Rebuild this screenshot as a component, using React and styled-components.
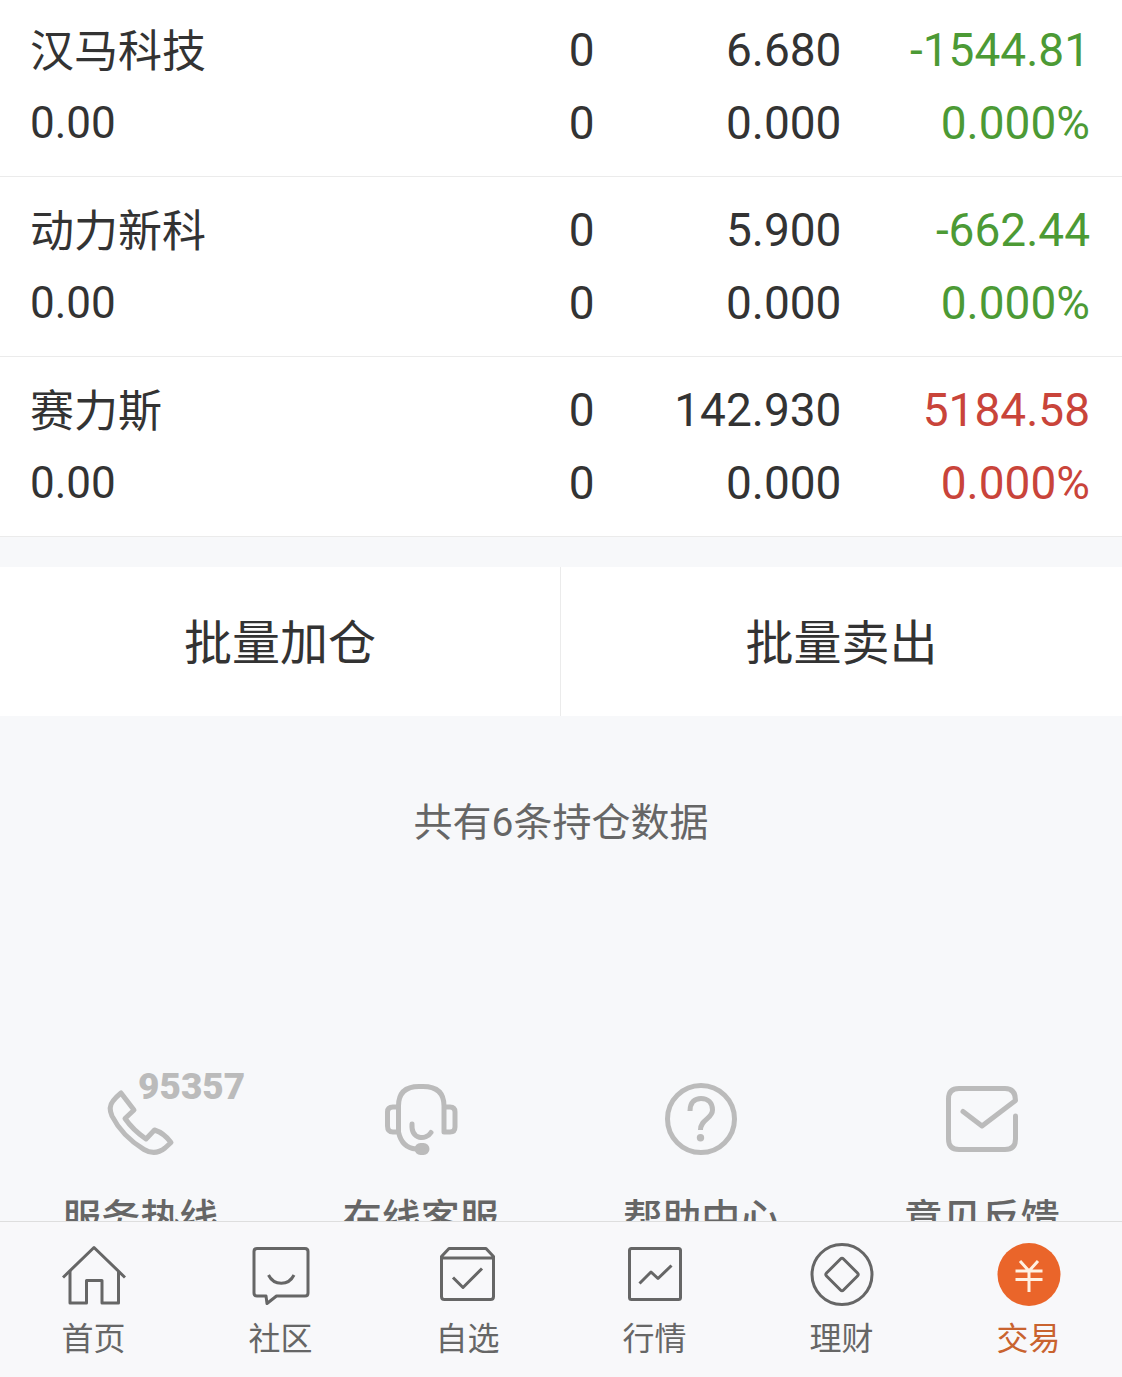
import React from "react";
import styled, { createGlobalStyle } from "styled-components";

const color = {
  ink: "#333333",
  muted: "#666666",
  icon: "#bbbbbb",
  up: "#c9443a",
  down: "#4c9a35",
  accent: "#ea652a",
  accentText: "#c9632f",
  page: "#f7f8fa",
  bar: "#f8f8fa",
  line: "#ebebeb",
};

const GlobalStyle = createGlobalStyle`
  * { box-sizing: border-box; }
  body {
    margin: 0;
    background: ${color.page};
    color: ${color.ink};
    font-family: Roboto, "Noto Sans CJK SC", sans-serif;
  }
`;

const Screen = styled.div`
  display: flex;
  flex-direction: column;
  height: 100vh;
`;

const Content = styled.main`
  flex: 1;
  min-height: 0;
  overflow-y: auto;
  scrollbar-width: none;
`;

const Positions = styled.table`
  width: 100%;
  margin-top: -3px;
  table-layout: fixed;
  border-collapse: separate;
  border-spacing: 0;
  background: #ffffff;
`;

const Column = styled.col`
  width: ${(p) => p.$share}%;
`;

const Cell = styled.td`
  padding: 17px 0 16px;
  border-bottom: 1px solid ${color.line};
  color: ${(p) => p.$tone || color.ink};
  text-align: right;
  font-size: 46px;
  line-height: 73px;

  &:last-child {
    padding-right: 32px;
  }
`;

const NameCell = styled.th`
  padding: 17px 0 16px 30px;
  border-bottom: 1px solid ${color.line};
  text-align: left;
  font-size: 44px;
  font-weight: 400;
  line-height: 73px;
`;

const Line = styled.div`
  height: 73px;
  white-space: nowrap;
`;

const StockName = styled(Line)`
  line-height: 77px;
`;

const Actions = styled.div`
  display: grid;
  grid-template-columns: 1fr 1fr;
  margin-top: 30px;
  background: #ffffff;
`;

const Action = styled.button`
  padding: 41px 0 36px;
  border: 0;
  background: none;
  color: ${color.ink};
  font: inherit;
  font-size: 48px;
  line-height: 72px;

  &:first-child {
    border-right: 1px solid ${color.line};
  }
`;

const Summary = styled.p`
  margin: 62px 0 0;
  color: ${color.muted};
  text-align: center;
  font-size: 39px;
  line-height: 90px;
`;

const Services = styled.div`
  display: grid;
  grid-template-columns: repeat(4, 1fr);
  margin-top: 215px;
`;

const Service = styled.a`
  display: flex;
  flex-direction: column;
  align-items: center;
  gap: 32px;
  color: ${color.muted};
  text-decoration: none;
  font-size: 39px;
  font-weight: 500;
  line-height: 64px;
`;

const ServiceIcon = styled.svg`
  width: 72px;
  height: 72px;
  overflow: visible;
  fill: none;
  stroke: ${color.icon};
  stroke-width: 5;
  stroke-linecap: round;
  stroke-linejoin: round;
`;

const HotlineNumber = styled.text`
  fill: ${color.icon};
  stroke: none;
  font-size: 37px;
  font-weight: 900;
`;

const TabBar = styled.nav`
  display: grid;
  grid-template-columns: repeat(6, 1fr);
  padding: 21px 0 14px;
  border-top: 1px solid #dedede;
  background: ${color.bar};
`;

const Tab = styled.a`
  display: flex;
  flex-direction: column;
  align-items: center;
  gap: 8px;
  color: ${(p) => (p.$active ? color.accentText : color.muted)};
  text-decoration: none;
  font-size: 32px;
  line-height: 48px;
`;

const TabIcon = styled.svg`
  width: 64px;
  height: 64px;
  fill: none;
  stroke: ${color.muted};
  stroke-width: 3;
  stroke-linejoin: round;
`;

const positions = [
  { name: "汉马科技", price: "6.680", profit: "-1544.81", tone: color.down },
  { name: "动力新科", price: "5.900", profit: "-662.44", tone: color.down },
  { name: "赛力斯", price: "142.930", profit: "5184.58", tone: color.up },
];

const services = [
  {
    label: "服务热线",
    icon: (
      <>
        <path d="M17 10 30 27 21 35.500Q29 47 42 56L50.500 47Q60 50 67 59.500L61 65Q51 73 40 66.500Q18 53 8 33Q4 24 9 18Q12 14 17 10Z" />
        <HotlineNumber x="34" y="16">95357</HotlineNumber>
      </>
    ),
  },
  {
    label: "在线客服",
    icon: (
      <>
        <path d="M13.500 24V23Q13.500 3.500 34 3.500H38Q59 3.500 59 23V49H65Q70 49 70 44V29Q70 24 65 24H59" />
        <path d="M13.500 24H8Q2.500 24 2.500 29V43Q2.500 49 8 49H13.500V24M13.500 49Q17 65 31 66" />
        <path d="M27 41C26 57 41 57.500 46 49.500" />
        <rect x="32" y="62.500" width="10" height="7" rx="3.500" fill={color.icon} />
      </>
    ),
  },
  {
    label: "帮助中心",
    icon: (
      <>
        <circle cx="36" cy="36" r="33.500" />
        <path
          d="M25 28C25 19 30 15.500 36 15.500C43 15.500 47.500 20 47.500 27C47.500 36 35.500 36 35.500 47"
          strokeLinecap="butt"
        />
        <circle cx="35.500" cy="54.700" r="3.700" fill={color.icon} stroke="none" />
      </>
    ),
  },
  {
    label: "意见反馈",
    icon: (
      <path d="M69.500 33V56Q69.500 66.500 59 66.500H13Q2.500 66.500 2.500 56V16Q2.500 5.500 13 5.500H59Q69.500 5.500 69.500 17.500L36 43 17 28.500" />
    ),
  },
];

const tabs = [
  {
    label: "首页",
    icon: (
      <>
        <path d="M1 34.500 32 4.500 63 34.500" />
        <path d="M8 28V60H24.500V37.500H40V60H56.500V28" />
      </>
    ),
  },
  {
    label: "社区",
    icon: (
      <>
        <path d="M8 5.500H56Q59 5.500 59 8.500V50Q59 53 56 53H27.500L18 60.500 17 53H8Q5 53 5 50V8.500Q5 5.500 8 5.500Z" />
        <path d="M19.500 32C25 43 39.500 43 45 32" />
      </>
    ),
  },
  {
    label: "自选",
    icon: (
      <>
        <path d="M5.500 13.500 13 5.500H50L57.500 13.500V53.500Q57.500 56.500 54.500 56.500H8.500Q5.500 56.500 5.500 53.500ZM5.500 15H57.500" />
        <path d="M17 34.500 27 44.500 46 25.500" />
      </>
    ),
  },
  {
    label: "行情",
    icon: (
      <>
        <rect x="6.500" y="5.500" width="51" height="51" rx="2" />
        <path d="M16.500 40.500 28 29 35 35.500 48.500 22.500" />
      </>
    ),
  },
  {
    label: "理财",
    icon: (
      <>
        <circle cx="32" cy="31.500" r="30" />
        <path d="M30.500 16Q32 14.500 33.500 16L47.500 30Q49 31.500 47.500 33L33.500 47Q32 48.500 30.500 47L16.500 33Q15 31.500 16.500 30Z" />
      </>
    ),
  },
  {
    label: "交易",
    active: true,
    icon: (
      <>
        <circle cx="32" cy="31.500" r="31.500" fill={color.accent} stroke="none" />
        <path d="M23 18 32 28 41 18M18.500 28H45.500M18.500 36.500H45.500M32 28V49" stroke="#fff1e2" />
      </>
    ),
  },
];

export default function App() {
  return (
    <Screen>
      <GlobalStyle />
      <Content>
        <Positions>
          <colgroup>
            <Column $share={35} />
            <Column $share={18} />
            <Column $share={22} />
            <Column $share={25} />
          </colgroup>
          <tbody>
            {positions.map((item) => (
              <tr key={item.name}>
                <NameCell scope="row">
                  <StockName>{item.name}</StockName>
                  <Line>0.00</Line>
                </NameCell>
                <Cell>
                  <Line>0</Line>
                  <Line>0</Line>
                </Cell>
                <Cell>
                  <Line>{item.price}</Line>
                  <Line>0.000</Line>
                </Cell>
                <Cell $tone={item.tone}>
                  <Line>{item.profit}</Line>
                  <Line>0.000%</Line>
                </Cell>
              </tr>
            ))}
          </tbody>
        </Positions>
        <Actions>
          <Action type="button">批量加仓</Action>
          <Action type="button">批量卖出</Action>
        </Actions>
        <Summary>共有6条持仓数据</Summary>
        <Services>
          {services.map((item) => (
            <Service key={item.label} href="#">
              <ServiceIcon viewBox="0 0 72 72" aria-hidden="true">{item.icon}</ServiceIcon>
              {item.label}
            </Service>
          ))}
        </Services>
      </Content>
      <TabBar>
        {tabs.map((item) => (
          <Tab key={item.label} href="#" $active={item.active} aria-current={item.active ? "page" : undefined}>
            <TabIcon viewBox="0 0 64 64" aria-hidden="true">{item.icon}</TabIcon>
            {item.label}
          </Tab>
        ))}
      </TabBar>
    </Screen>
  );
}
